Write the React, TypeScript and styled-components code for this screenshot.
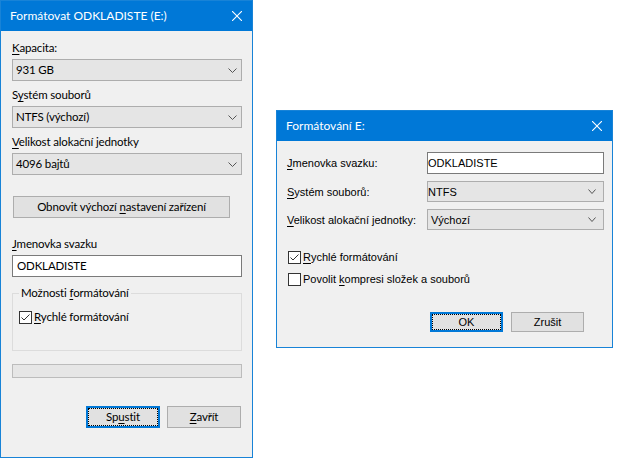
import styled, { createGlobalStyle } from 'styled-components';

const GlobalStyle = createGlobalStyle`
  html, body {
    margin: 0;
    padding: 0;
    background: #fff;
  }
  body {
    font-family: Lato, 'Liberation Sans', sans-serif;
    color: #000;
  }
`;

const UI_FONT = `Lato, 'Liberation Sans', sans-serif`;
const CLASSIC_FONT = `'Liberation Sans', Arial, sans-serif`;

const Page = styled.div`
  display: flex;
  align-items: flex-start;
  width: 638px;
  height: 458px;
  overflow: hidden;
`;

const Window = styled.div<{ $w: number; $h: number; $top?: number; $left?: number }>`
  box-sizing: border-box;
  width: ${p => p.$w}px;
  height: ${p => p.$h}px;
  margin: ${p => p.$top ?? 0}px 0 0 ${p => p.$left ?? 0}px;
  border: 1px solid #1883d7;
  background: #f0f0f0;
  display: flex;
  flex-direction: column;
  flex-shrink: 0;
`;

const TitleBar = styled.div`
  height: 30px;
  flex-shrink: 0;
  background: #0078d7;
  color: #fff;
  display: flex;
  align-items: center;
  justify-content: space-between;
  padding: 0 10px 0 9px;
  font: 12px/16px ${UI_FONT};
`;

const LeftBody = styled.div`
  display: flex;
  flex-direction: column;
  padding: 0 10px 0 11px;
  font: 11.5px/16px ${UI_FONT};
  letter-spacing: -0.15px;
`;

const Field = styled.div<{ $mt: number }>`
  display: flex;
  flex-direction: column;
  margin-top: ${p => p.$mt}px;
`;

const Label = styled.div`
  margin-bottom: 3px;
  white-space: nowrap;
`;

const Acc = styled.span`
  text-decoration: underline;
  text-underline-offset: 2px;
  text-decoration-thickness: 1px;
`;

const Combo = styled.div<{ $h?: number; $pad?: number; $arrowPad?: number }>`
  box-sizing: border-box;
  height: ${p => p.$h ?? 22}px;
  border: 1px solid #adadad;
  background: #e5e5e5;
  display: flex;
  align-items: center;
  justify-content: space-between;
  padding: 0 ${p => p.$arrowPad ?? 4}px 0 ${p => p.$pad ?? 3}px;
  white-space: nowrap;
`;

const TextBox = styled.div<{ $h?: number; $pad?: number }>`
  box-sizing: border-box;
  height: ${p => p.$h ?? 22}px;
  border: 1px solid #7a7a7a;
  background: #fff;
  display: flex;
  align-items: center;
  padding: 0 4px 0 ${p => p.$pad ?? 4}px;
  white-space: nowrap;
`;

const Button = styled.div<{ $w: number; $h: number; $focused?: boolean }>`
  box-sizing: border-box;
  width: ${p => p.$w}px;
  height: ${p => p.$h}px;
  flex-shrink: 0;
  background: #e1e1e1;
  border: ${p => (p.$focused ? '2px solid #0078d7' : '1px solid #adadad')};
  outline: ${p => (p.$focused ? '1px dotted #000' : 'none')};
  outline-offset: -3px;
  display: flex;
  align-items: center;
  justify-content: center;
  white-space: nowrap;
`;

const ResetButton = styled(Button)`
  margin-top: 21px;
  margin-left: 1px;
`;

const Group = styled.fieldset`
  box-sizing: border-box;
  margin: 8px 0 0;
  height: 66px;
  min-width: 0;
  padding: 8px 6px 0;
  border: 1px solid #dcdcdc;
`;

const Legend = styled.legend`
  padding: 0 2px;
  font: inherit;
  line-height: 16px;
`;

const CheckRow = styled.div<{ $mt?: number; $ml?: number }>`
  display: flex;
  align-items: center;
  gap: 2px;
  height: 16px;
  margin-top: ${p => p.$mt ?? 0}px;
  margin-left: ${p => p.$ml ?? 0}px;
  white-space: nowrap;
`;

const Box = styled.div`
  box-sizing: border-box;
  width: 13px;
  height: 13px;
  border: 1px solid #333;
  background: #fff;
  display: flex;
  align-items: center;
  justify-content: center;
  flex-shrink: 0;
`;

const Progress = styled.div`
  box-sizing: border-box;
  margin-top: 13px;
  height: 14px;
  border: 1px solid #bcbcbc;
  background: #e6e6e6;
`;

const ButtonRow = styled.div<{ $mt: number; $gap: number; $pr: number }>`
  display: flex;
  justify-content: flex-end;
  gap: ${p => p.$gap}px;
  margin-top: ${p => p.$mt}px;
  padding-right: ${p => p.$pr}px;
`;

const RightBody = styled.div`
  display: flex;
  flex-direction: column;
  padding: 11px 10px 0;
  font: 11px/14px ${CLASSIC_FONT};
`;

const FormGrid = styled.div`
  display: grid;
  grid-template-columns: 140px 177px;
  grid-template-rows: 22px 21px 21px;
  row-gap: 7px;
  align-items: center;
`;

const GridLabel = styled.div`
  white-space: nowrap;
`;

const Chevron = ({ w = 9 }: { w?: number }) => (
  <svg width={w} height={5} viewBox={`0 0 ${w} 5`}>
    <polyline
      points={`0.5,0.5 ${w / 2},${4.5} ${w - 0.5},0.5`}
      fill='none'
      stroke='#555'
      strokeWidth='1'
    />
  </svg>
);

const CloseIcon = () => (
  <svg width={10} height={10} viewBox='0 0 10 10'>
    <path d='M0 0L10 10M10 0L0 10' stroke='#fff' strokeWidth='1.1' />
  </svg>
);

const Check = ({ checked }: { checked?: boolean }) => (
  <Box>
    {checked && (
      <svg width={11} height={11} viewBox='0 0 11 11'>
        <polyline
          points='1.5,5.5 4,8 9.5,2.5'
          fill='none'
          stroke='#333'
          strokeWidth='1'
        />
      </svg>
    )}
  </Box>
);

function App() {
  return (
    <>
      <GlobalStyle />
      <Page>
        <Window $w={253} $h={458}>
          <TitleBar>
            <span>Formátovat ODKLADISTE (E:)</span>
            <CloseIcon />
          </TitleBar>
          <LeftBody>
            <Field $mt={9}>
              <Label>
                <Acc>K</Acc>apacita:
              </Label>
              <Combo>
                <span>931 GB</span>
                <Chevron />
              </Combo>
            </Field>
            <Field $mt={6}>
              <Label>
                S<Acc>y</Acc>stém souborů
              </Label>
              <Combo>
                <span>NTFS (výchozí)</span>
                <Chevron />
              </Combo>
            </Field>
            <Field $mt={6}>
              <Label>
                <Acc>V</Acc>elikost alokační jednotky
              </Label>
              <Combo>
                <span>4096 bajtů</span>
                <Chevron />
              </Combo>
            </Field>
            <ResetButton $w={217} $h={22}>
              Obnovit výchozí&nbsp;<Acc>n</Acc>astavení zařízení
            </ResetButton>
            <Field $mt={18}>
              <Label>
                <Acc>J</Acc>menovka svazku
              </Label>
              <TextBox>ODKLADISTE</TextBox>
            </Field>
            <Group>
              <Legend>
                Možnosti <Acc>f</Acc>ormátování
              </Legend>
              <CheckRow>
                <Check checked />
                <span>
                  <Acc>R</Acc>ychlé formátování
                </span>
              </CheckRow>
            </Group>
            <Progress />
            <ButtonRow $mt={28} $gap={7} $pr={1}>
              <Button $w={74} $h={22} $focused>
                Sp<Acc>u</Acc>stit
              </Button>
              <Button $w={74} $h={22}>
                <Acc>Z</Acc>avřít
              </Button>
            </ButtonRow>
          </LeftBody>
        </Window>

        <Window $w={337} $h={238} $top={110} $left={23}>
          <TitleBar>
            <span>Formátování E:</span>
            <CloseIcon />
          </TitleBar>
          <RightBody>
            <FormGrid>
              <GridLabel>
                <Acc>J</Acc>menovka svazku:
              </GridLabel>
              <TextBox $pad={0}>ODKLADISTE</TextBox>
              <GridLabel>
                <Acc>S</Acc>ystém souborů:
              </GridLabel>
              <Combo $h={21} $pad={0} $arrowPad={7}>
                <span>NTFS</span>
                <Chevron w={8} />
              </Combo>
              <GridLabel>
                <Acc>V</Acc>elikost alokační jednotky:
              </GridLabel>
              <Combo $h={21} $pad={3} $arrowPad={7}>
                <span>Výchozí</span>
                <Chevron w={8} />
              </Combo>
            </FormGrid>
            <CheckRow $mt={19} $ml={1}>
              <Check checked />
              <span>
                <Acc>R</Acc>ychlé formátování
              </span>
            </CheckRow>
            <CheckRow $mt={6} $ml={1}>
              <Check />
              <span>
                Povolit <Acc>k</Acc>ompresi složek a souborů
              </span>
            </CheckRow>
            <ButtonRow $mt={25} $gap={8} $pr={18}>
              <Button $w={73} $h={20} $focused>
                OK
              </Button>
              <Button $w={73} $h={20}>
                Zrušit
              </Button>
            </ButtonRow>
          </RightBody>
        </Window>
      </Page>
    </>
  );
}

export default App;
